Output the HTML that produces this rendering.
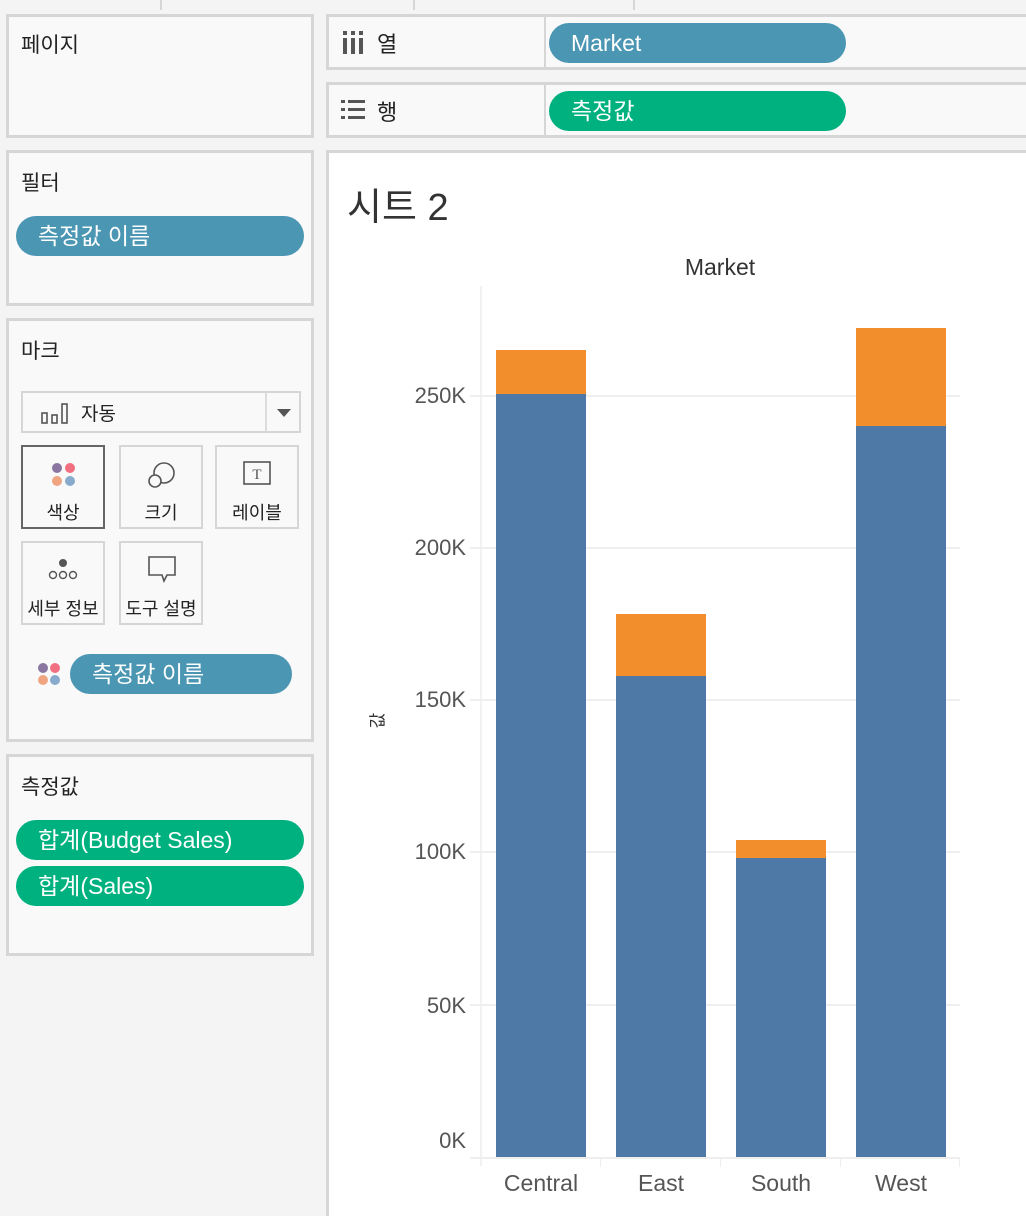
<!DOCTYPE html>
<html><head><meta charset="utf-8"><style>
*{margin:0;padding:0;box-sizing:border-box}
html,body{width:1026px;height:1216px;overflow:hidden}
body{background:#f4f4f4;position:relative;font-family:"Liberation Sans","Noto Sans CJK KR",sans-serif;color:#222}
.a{position:absolute}
.panel{position:absolute;background:#f9f9f9;border:3px solid #d6d6d6}
.ttl{position:absolute;left:12px;font-size:21px;color:#222}
.pill{position:absolute;height:40px;border-radius:20px;color:#fff;font-size:23px;line-height:40px;padding-left:22px}
.blue{background:#4a96b3}.green{background:#00b180}
.card{position:absolute;width:84px;height:84px;border:2px solid #d6d6d6;background:#f9f9f9;text-align:center;font-size:18px}
.card span{position:absolute;left:0;right:0;top:52px}
.ylab{position:absolute;width:60px;text-align:right;left:406px;font-size:22px;color:#555}
.grid{position:absolute;left:470px;width:490px;height:2px;background:#efefef}
.xl{position:absolute;width:120px;text-align:center;font-size:23px;color:#555;top:1170px}
</style></head><body>
<div class="a" style="left:160px;top:0;width:2px;height:10px;background:#d6d6d6"></div>
<div class="a" style="left:413px;top:0;width:2px;height:10px;background:#d6d6d6"></div>
<div class="a" style="left:633px;top:0;width:2px;height:10px;background:#d6d6d6"></div>

<div class="panel" style="left:6px;top:14px;width:308px;height:124px"><div class="ttl" style="top:12px">페이지</div></div>
<div class="panel" style="left:6px;top:150px;width:308px;height:156px"><div class="ttl" style="top:14px">필터</div>
<div class="pill blue" style="left:7px;top:63px;width:288px">측정값 이름</div></div>

<div class="panel" style="left:6px;top:318px;width:308px;height:424px"><div class="ttl" style="top:14px">마크</div>
<div class="a" style="left:12px;top:70px;width:280px;height:42px;border:2px solid #d6d6d6;background:#f9f9f9">
<svg class="a" style="left:18px;top:8px" width="30" height="24"><g fill="none" stroke="#555" stroke-width="1.6"><rect x="1" y="12" width="5" height="10"/><rect x="11" y="14" width="5" height="8"/><rect x="21" y="3" width="5" height="19"/></g></svg>
<div class="a" style="left:58px;top:6px;font-size:19px">자동</div>
<div class="a" style="left:242px;top:0;width:2px;height:38px;background:#ddd"></div>
<div class="a" style="left:254px;top:16px;width:0;height:0;border-left:7px solid transparent;border-right:7px solid transparent;border-top:8px solid #555"></div></div>
<div class="card" style="left:12px;top:124px;border-color:#666"><svg class="a" style="left:27px;top:14px" width="30" height="30"><circle cx="7" cy="7" r="5" fill="#8a76a0"/><circle cx="20" cy="7" r="5" fill="#f06f80"/><circle cx="7" cy="20" r="5" fill="#f0a480"/><circle cx="20" cy="20" r="5" fill="#88aacc"/></svg><span>색상</span></div>
<div class="card" style="left:110px;top:124px"><svg class="a" style="left:26px;top:12px" width="32" height="32"><g fill="none" stroke="#555" stroke-width="1.6"><circle cx="17" cy="14" r="10"/><circle cx="8" cy="22" r="6" fill="#f9f9f9"/></g></svg><span>크기</span></div>
<div class="card" style="left:206px;top:124px"><svg class="a" style="left:26px;top:14px" width="30" height="26"><rect x="1" y="1" width="26" height="22" fill="none" stroke="#555" stroke-width="1.6"/><text x="14" y="18" font-size="15" text-anchor="middle" font-family="Liberation Serif" fill="#555">T</text></svg><span>레이블</span></div>
<div class="card" style="left:12px;top:220px"><svg class="a" style="left:24px;top:14px" width="36" height="26"><circle cx="16" cy="6" r="4" fill="#555"/><g fill="none" stroke="#555" stroke-width="1.4"><circle cx="6" cy="18" r="3.5"/><circle cx="16" cy="18" r="3.5"/><circle cx="26" cy="18" r="3.5"/></g></svg><span>세부 정보</span></div>
<div class="card" style="left:110px;top:220px"><svg class="a" style="left:26px;top:12px" width="32" height="32"><path d="M2 2H28V20H20L17 26L15 20H2Z" fill="none" stroke="#555" stroke-width="1.6"/></svg><span>도구 설명</span></div>
<svg class="a" style="left:26px;top:340px" width="30" height="30"><circle cx="8" cy="7" r="5" fill="#8a76a0"/><circle cx="20" cy="7" r="5" fill="#f06f80"/><circle cx="8" cy="19" r="5" fill="#f0a480"/><circle cx="20" cy="19" r="5" fill="#88aacc"/></svg>
<div class="pill blue" style="left:61px;top:333px;width:222px">측정값 이름</div></div>

<div class="panel" style="left:6px;top:754px;width:308px;height:202px"><div class="ttl" style="top:14px">측정값</div>
<div class="pill green" style="left:7px;top:63px;width:288px">합계(Budget Sales)</div>
<div class="pill green" style="left:7px;top:109px;width:288px">합계(Sales)</div></div>

<div class="panel" style="left:326px;top:14px;width:720px;height:56px">
<svg class="a" style="left:13px;top:14px" width="22" height="24"><g fill="#555"><rect x="1" y="0" width="4" height="4"/><rect x="1" y="7" width="4" height="16"/><rect x="9" y="0" width="4" height="4"/><rect x="9" y="7" width="4" height="16"/><rect x="17" y="0" width="4" height="4"/><rect x="17" y="7" width="4" height="16"/></g></svg>
<div class="a" style="left:48px;top:10px;font-size:22px">열</div>
<div class="a" style="left:215px;top:0;width:2px;height:52px;background:#d6d6d6"></div>
<div class="pill blue" style="left:220px;top:6px;width:297px;padding-left:22px">Market</div></div>
<div class="panel" style="left:326px;top:82px;width:720px;height:56px">
<svg class="a" style="left:12px;top:14px" width="26" height="22"><g fill="#555"><rect x="0" y="1" width="4" height="3"/><rect x="7" y="1" width="17" height="3"/><rect x="0" y="9" width="4" height="3"/><rect x="7" y="9" width="17" height="3"/><rect x="0" y="17" width="4" height="3"/><rect x="7" y="17" width="17" height="3"/></g></svg>
<div class="a" style="left:48px;top:10px;font-size:22px">행</div>
<div class="a" style="left:215px;top:0;width:2px;height:52px;background:#d6d6d6"></div>
<div class="pill green" style="left:220px;top:6px;width:297px;padding-left:22px">측정값</div></div>

<div class="a" style="left:326px;top:150px;width:720px;height:1100px;background:#fff;border:3px solid #d6d6d6"></div>
<div class="a" style="left:347px;top:176px;font-size:38px;color:#333">시트 2</div>
<div class="a" style="left:660px;top:254px;width:120px;text-align:center;font-size:23px;color:#333">Market</div>
<div class="a" style="left:480px;top:286px;width:2px;height:880px;background:#f2f2f2"></div>
<div class="grid" style="top:395px"></div><div class="grid" style="top:547px"></div><div class="grid" style="top:699px"></div><div class="grid" style="top:851px"></div><div class="grid" style="top:1004px"></div>
<div class="a" style="left:470px;top:1157px;width:490px;height:2px;background:#eee"></div>
<div class="a" style="left:600px;top:1159px;width:1px;height:8px;background:#eee"></div>
<div class="a" style="left:720px;top:1159px;width:1px;height:8px;background:#eee"></div>
<div class="a" style="left:840px;top:1159px;width:1px;height:8px;background:#eee"></div>
<div class="a" style="left:959px;top:1159px;width:1px;height:8px;background:#eee"></div>
<div class="ylab" style="top:383px">250K</div><div class="ylab" style="top:535px">200K</div><div class="ylab" style="top:687px">150K</div><div class="ylab" style="top:839px">100K</div><div class="ylab" style="top:993px">50K</div><div class="ylab" style="top:1128px">0K</div>
<div class="a" style="left:368px;top:708px;font-size:17px;transform:rotate(-90deg);color:#333">값</div>

<div class="a" style="left:496px;top:350px;width:90px;height:44px;background:#f28e2b"></div><div class="a" style="left:496px;top:394px;width:90px;height:763px;background:#4e79a7"></div>
<div class="a" style="left:616px;top:614px;width:90px;height:62px;background:#f28e2b"></div><div class="a" style="left:616px;top:676px;width:90px;height:481px;background:#4e79a7"></div>
<div class="a" style="left:736px;top:840px;width:90px;height:18px;background:#f28e2b"></div><div class="a" style="left:736px;top:858px;width:90px;height:299px;background:#4e79a7"></div>
<div class="a" style="left:856px;top:328px;width:90px;height:98px;background:#f28e2b"></div><div class="a" style="left:856px;top:426px;width:90px;height:731px;background:#4e79a7"></div>

<div class="xl" style="left:481px">Central</div><div class="xl" style="left:601px">East</div><div class="xl" style="left:721px">South</div><div class="xl" style="left:841px">West</div>
</body></html>
